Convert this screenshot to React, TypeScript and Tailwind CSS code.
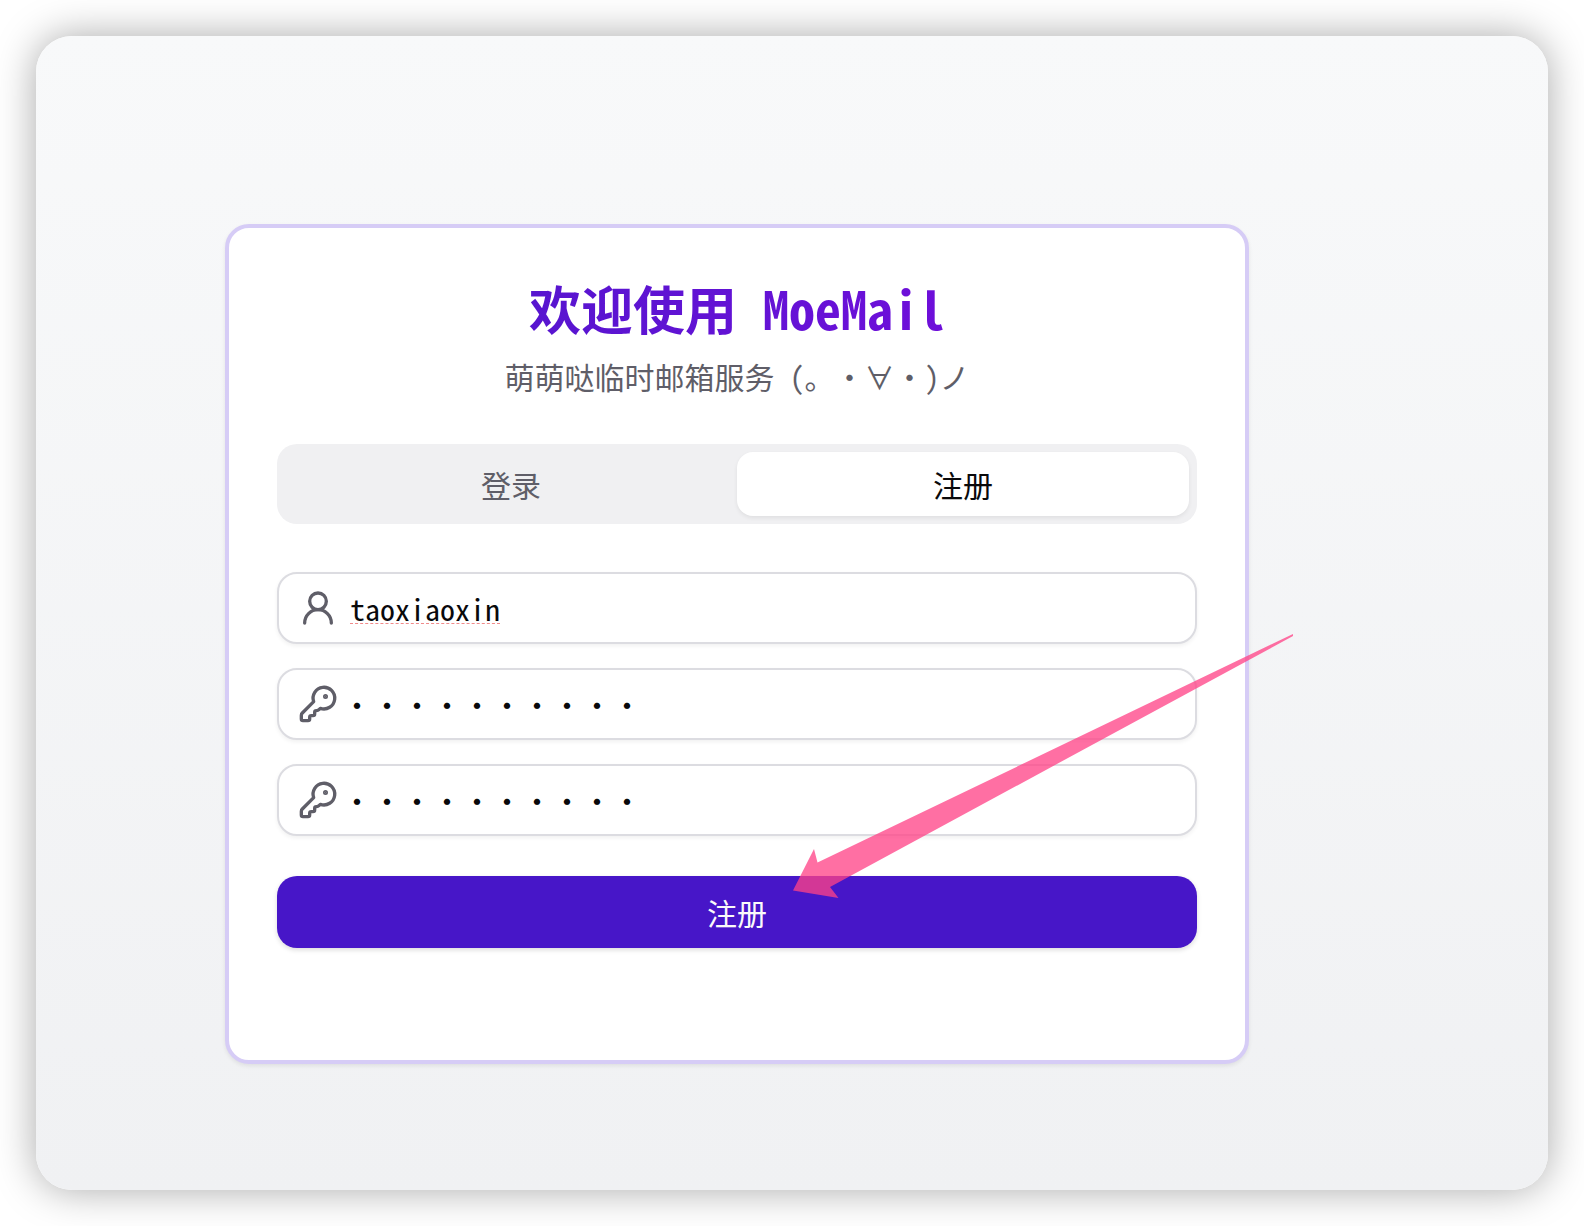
import { useState } from "react";
import type { ReactNode } from "react";
import { KeyRound, UserRound } from "lucide-react";

function Field({ id, label, icon, children }: { id: string; label: string; icon: ReactNode; children: ReactNode }) {
  return (
    <div className="flex h-18 items-center gap-3 rounded-[20px] border-2 border-[#dcdce1] bg-white pr-5 pl-[19px] shadow-[0_2px_4px_rgba(0,0,0,0.06)]">
      <label htmlFor={id} aria-label={label} className="shrink-0 text-[#5f5e68]">
        {icon}
      </label>
      {children}
    </div>
  );
}

function Arrow() {
  return (
    <svg
      className="pointer-events-none absolute top-[406px] left-[564px] h-[264px] w-[500px]"
      viewBox="0 0 500 264"
      aria-hidden="true"
    >
      <path d="M0 256.5L21 215L24.5 228.5L500 0V2L37 253L45.5 264Z" fill="rgb(255 66 134)" fillOpacity="0.76" />
    </svg>
  );
}

export default function App() {
  const [username, setUsername] = useState("taoxiaoxin");
  const [password, setPassword] = useState("moemail123");
  const [confirm, setConfirm] = useState("moemail123");

  return (
    <main className="flex min-h-screen flex-col bg-white p-9 font-['Noto_Sans_Mono_CJK_SC','Noto_Sans_CJK_SC',monospace] text-[#09090b]">
      <div className="flex-1 rounded-[36px] bg-linear-to-b from-[#f8f9fa] to-[#f0f1f3] pt-[188px] pr-[299px] pb-[126px] pl-[189px] shadow-[0_0_40px_rgba(0,0,0,0.34)]">
        <section className="relative w-full max-w-[1024px] rounded-3xl border-4 border-[#d6ccf6] bg-white px-12 pt-12 pb-28 shadow-[0_2px_4px_rgba(0,0,0,0.08)]">
          <header className="text-center">
            <h1 className="bg-linear-to-r from-[#4916c9] to-[#7c05e0] bg-clip-text text-[52px] leading-16 font-bold text-transparent">
              欢迎使用 MoeMail
            </h1>
            <p className="mt-4.5 text-[30px] leading-9 text-[#5f5e68] [text-spacing-trim:space-all]">
              萌萌哒临时邮箱服务 (。・∀・)ノ
            </p>
          </header>

          <div role="tablist" className="mt-[50px] grid h-20 grid-cols-2 rounded-[20px] bg-[#f0f0f2] p-2 text-[30px] leading-10 font-medium">
            <button type="button" role="tab" aria-selected="false" className="rounded-2xl text-[#5f5e68]">
              登录
            </button>
            <button
              type="button"
              role="tab"
              aria-selected="true"
              className="rounded-2xl bg-white shadow-[0_2px_4px_rgba(0,0,0,0.07)]"
            >
              注册
            </button>
          </div>

          <form className="mt-12" onSubmit={(event) => event.preventDefault()}>
            <div className="flex flex-col gap-6">
              <Field id="username" label="用户名" icon={<UserRound className="size-10" />}>
                <input
                  id="username"
                  type="text"
                  spellCheck={false}
                  value={username}
                  onChange={(event) => setUsername(event.target.value)}
                  className="min-w-0 flex-1 bg-transparent text-[30px] leading-10 underline decoration-[#f08a8a] decoration-dashed decoration-1 underline-offset-2 outline-none"
                />
              </Field>
              <Field id="password" label="密码" icon={<KeyRound className="size-10" />}>
                <input
                  id="password"
                  type="password"
                  value={password}
                  onChange={(event) => setPassword(event.target.value)}
                  className="-ml-2 min-w-0 flex-1 bg-transparent text-[30px] leading-10 outline-none"
                />
              </Field>
              <Field id="confirm" label="确认密码" icon={<KeyRound className="size-10" />}>
                <input
                  id="confirm"
                  type="password"
                  value={confirm}
                  onChange={(event) => setConfirm(event.target.value)}
                  className="-ml-2 min-w-0 flex-1 bg-transparent text-[30px] leading-10 outline-none"
                />
              </Field>
            </div>
            <button
              type="submit"
              className="mt-10 h-18 w-full rounded-[20px] bg-[#4716c8] text-[30px] leading-10 text-[#fafafa] shadow-[0_2px_5px_rgba(0,0,0,0.14)]"
            >
              注册
            </button>
          </form>
          <Arrow />
        </section>
      </div>
    </main>
  );
}
